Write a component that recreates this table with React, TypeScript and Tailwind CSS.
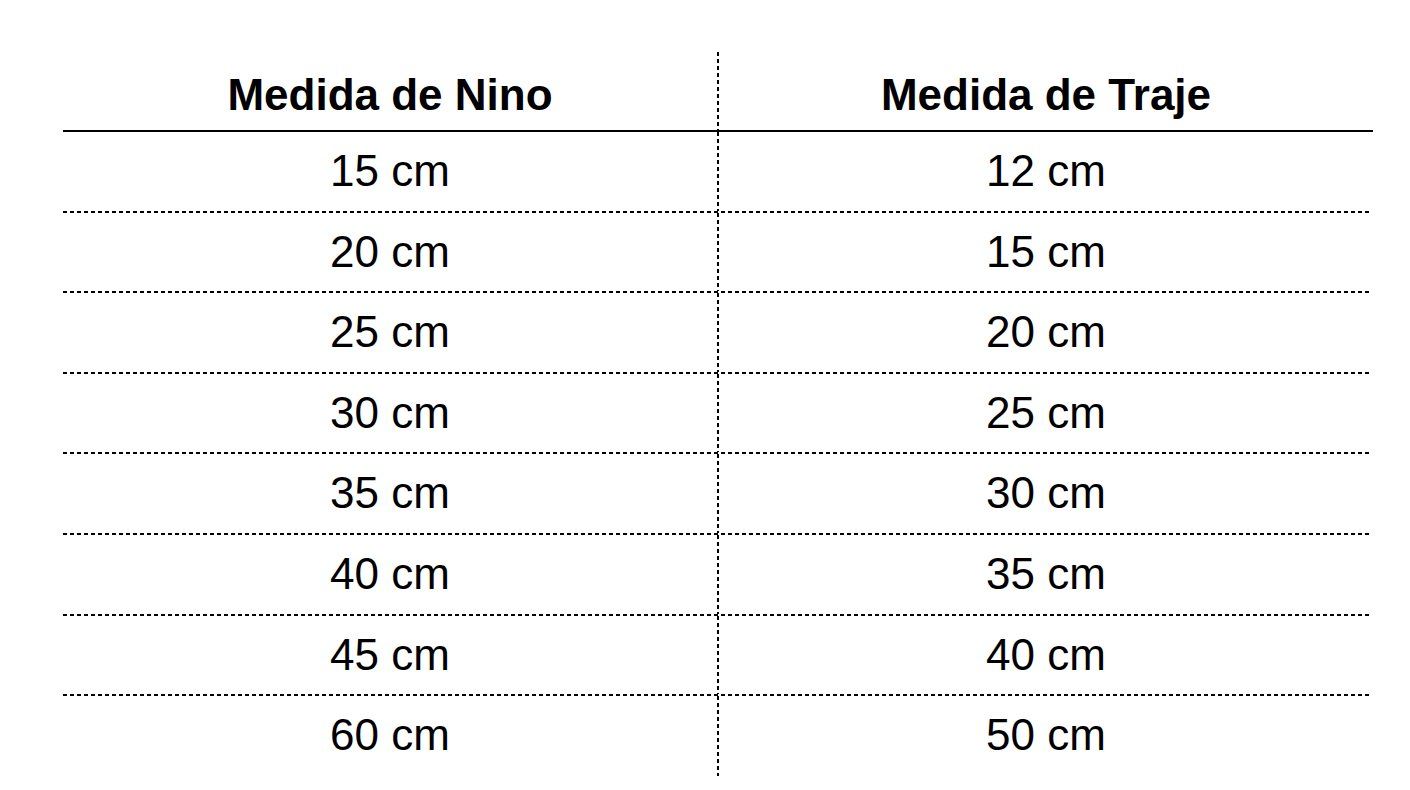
import React from 'react';

const rows: [string, string][] = [
  ['15 cm', '12 cm'],
  ['20 cm', '15 cm'],
  ['25 cm', '20 cm'],
  ['30 cm', '25 cm'],
  ['35 cm', '30 cm'],
  ['40 cm', '35 cm'],
  ['45 cm', '40 cm'],
  ['60 cm', '50 cm'],
];

const VDivider = () => (
  <div className="w-[2px] self-stretch bg-[repeating-linear-gradient(to_bottom,#000_0_4px,transparent_4px_7px)]" />
);

const App: React.FC = () => {
  return (
    <div className="w-[1410px] h-[790px] bg-white text-black font-['Liberation_Sans',Arial,sans-serif] pt-[52px] pl-[63px]">
      <div className="w-[1310px] flex flex-col">
        {/* cabecera */}
        <div className="flex h-[78px]">
          <div className="w-[654px] flex items-end justify-center pb-[13px] text-[44px] leading-[44px] font-bold">
            Medida de Nino
          </div>
          <VDivider />
          <div className="w-[654px] flex items-end justify-center pb-[13px] text-[44px] leading-[44px] font-bold">
            Medida de Traje
          </div>
        </div>
        <div className="h-[2px] bg-black" />

        {rows.map(([nino, traje], i) => (
          <React.Fragment key={i}>
            {i > 0 && (
              <div className="h-[2px] w-[1309px] bg-[repeating-linear-gradient(to_right,#000_0_4px,transparent_4px_7px)]" />
            )}
            <div className={`flex ${i === rows.length - 1 ? 'h-[80px]' : 'h-[78.6px]'}`}>
              <div className="w-[654px] flex items-start justify-center pt-[17px] text-[44px] leading-[44px]">
                {nino}
              </div>
              <VDivider />
              <div className="w-[654px] flex items-start justify-center pt-[17px] text-[44px] leading-[44px]">
                {traje}
              </div>
            </div>
          </React.Fragment>
        ))}
      </div>
    </div>
  );
};

export default App;
